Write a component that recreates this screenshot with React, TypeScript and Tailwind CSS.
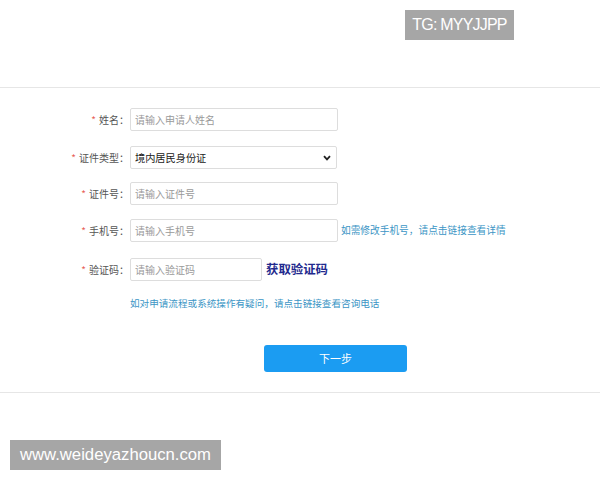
import React from "react";

const cjk = { fontFamily: '"Noto Sans CJK SC", "Noto Sans", sans-serif' };
const latin = { fontFamily: '"Liberation Sans", Arial, sans-serif' };

const Label = ({ text }: { text: string }) => (
  <label className="w-[130px] shrink-0 pr-[1px] text-right text-[10px] leading-[23px] text-[#555]">
    <span className="text-[#e8605a] mr-[3px]">*</span>
    {text}：
  </label>
);

const TextInput = ({ placeholder, width = "w-[208px]" }: { placeholder: string; width?: string }) => (
  <input
    placeholder={placeholder}
    className={`${width} block h-[23px] rounded-[2px] border border-[#dddddd] bg-white px-[4px] text-[10px] text-[#333] outline-none placeholder:text-[#9a9a9a]`}
  />
);

export default function App() {
  return (
    <div className="relative h-[480px] w-[600px] overflow-hidden bg-white" style={cjk}>
      {/* top bar */}
      <div className="h-[88px] border-b border-[#e6e6e6]" />

      <div className="absolute left-[405px] top-[10px] flex h-[30px] w-[109px] items-center justify-center bg-[#a6a6a6] text-[16px] tracking-[-0.8px] text-white" style={latin}>
        TG: MYYJJPP
      </div>

      {/* form */}
      <form className="border-b border-[#e6e6e6] pt-[20px] pb-[20px]" onSubmit={(e) => e.preventDefault()}>
        <div className="flex h-[23px] items-center">
          <Label text="姓名" />
          <TextInput placeholder="请输入申请人姓名" />
        </div>

        <div className="mt-[15px] flex h-[23px] items-center">
          <Label text="证件类型" />
          <div className="relative">
            <select className="block h-[23px] w-[207px] appearance-none rounded-[2px] border border-[#dddddd] bg-white px-[4px] text-[10.2px] text-[#222] outline-none">
              <option>境内居民身份证</option>
            </select>
            <svg className="pointer-events-none absolute right-[6px] top-[9px]" width="8" height="6" viewBox="0 0 8 6">
              <path d="M1 1.2 4 4.4 7 1.2" fill="none" stroke="#222" strokeWidth="1.8" />
            </svg>
          </div>
        </div>

        <div className="mt-[13px] flex h-[23px] items-center">
          <Label text="证件号" />
          <TextInput placeholder="请输入证件号" />
        </div>

        <div className="mt-[14px] flex h-[23px] items-center">
          <Label text="手机号" />
          <TextInput placeholder="请输入手机号" />
          <a className="ml-[3px] text-[9.7px] text-[#3b95c5]">如需修改手机号，请点击链接查看详情</a>
        </div>

        <div className="mt-[16px] flex h-[23px] items-center">
          <Label text="验证码" />
          <TextInput placeholder="请输入验证码" width="w-[132px]" />
          <button type="button" className="ml-[4px] text-[12.4px] font-bold text-[#1f2a8e]">
            获取验证码
          </button>
        </div>

        <p className="mt-[14px] pl-[130px] text-[9.6px] leading-[16px] text-[#3b95c5]">
          如对申请流程或系统操作有疑问，请点击链接查看咨询电话
        </p>

        <div className="mt-[34px] pl-[264px]">
          <button className="block h-[27px] w-[143px] rounded-[3px] bg-[#1b9cf2] text-[11px] text-white">
            下一步
          </button>
        </div>
      </form>

      <div className="absolute left-[10px] top-[440px] flex h-[30px] w-[211px] items-center justify-center bg-[#a6a6a6] text-[16.7px] text-white" style={latin}>
        www.weideyazhoucn.com
      </div>
    </div>
  );
}
